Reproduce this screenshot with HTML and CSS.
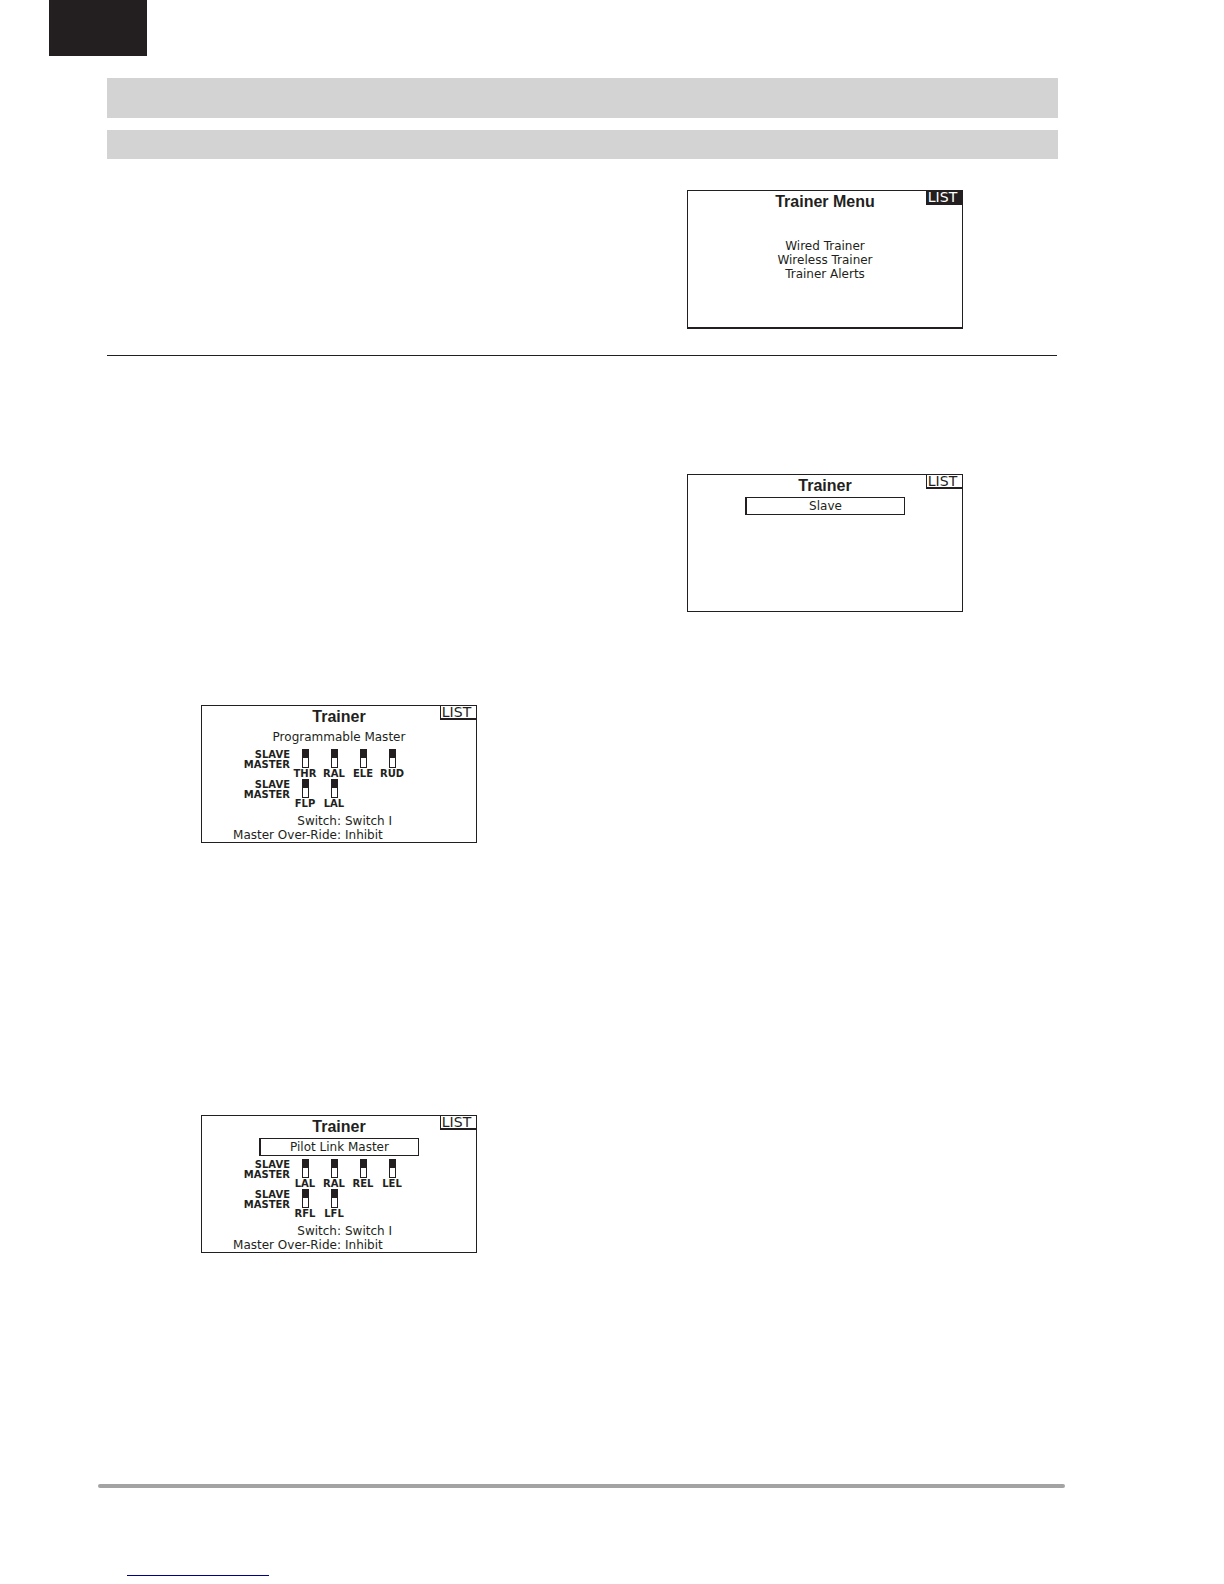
FILE: index.html
```
<!DOCTYPE html>
<html lang="en">
<head>
    <meta charset="utf-8">
    <title>Trainer</title>
    <link rel="stylesheet" href="styles.css">
</head>
<body>
    <header class="tab"></header>
    <main class="content">
        <div class="bar bar-title"></div>
        <div class="bar bar-section"></div>

        <section class="columns intro">
            <div class="column right">
                <div class="screen screen-menu">
                    <h2>Trainer Menu</h2>
                    <button class="list active">LIST</button>
                    <nav class="menu">
                        <a href="#wired">Wired Trainer</a>
                        <a href="#wireless">Wireless Trainer</a>
                        <a href="#alerts">Trainer Alerts</a>
                    </nav>
                </div>
            </div>
        </section>

        <section class="columns wired" id="wired">
            <div class="column left">
                <div class="screen">
                    <h2>Trainer</h2>
                    <button class="list">LIST</button>
                    <button class="mode">Programmable Master</button>
                    <div class="channels">
                        <div class="roles">SLAVE<br>MASTER</div>
                        <div class="channel"><i class="switch"></i>THR</div>
                        <div class="channel"><i class="switch"></i>RAL</div>
                        <div class="channel"><i class="switch"></i>ELE</div>
                        <div class="channel"><i class="switch"></i>RUD</div>
                    </div>
                    <div class="channels">
                        <div class="roles">SLAVE<br>MASTER</div>
                        <div class="channel"><i class="switch"></i>FLP</div>
                        <div class="channel"><i class="switch"></i>LAL</div>
                    </div>
                    <dl class="settings">
                        <dt>Switch:</dt>
                        <dd>Switch I</dd>
                        <dt>Master Over-Ride:</dt>
                        <dd>Inhibit</dd>
                    </dl>
                </div>

                <div class="screen">
                    <h2>Trainer</h2>
                    <button class="list">LIST</button>
                    <button class="mode selected">Pilot Link Master</button>
                    <div class="channels">
                        <div class="roles">SLAVE<br>MASTER</div>
                        <div class="channel"><i class="switch"></i>LAL</div>
                        <div class="channel"><i class="switch"></i>RAL</div>
                        <div class="channel"><i class="switch"></i>REL</div>
                        <div class="channel"><i class="switch"></i>LEL</div>
                    </div>
                    <div class="channels">
                        <div class="roles">SLAVE<br>MASTER</div>
                        <div class="channel"><i class="switch"></i>RFL</div>
                        <div class="channel"><i class="switch"></i>LFL</div>
                    </div>
                    <dl class="settings">
                        <dt>Switch:</dt>
                        <dd>Switch I</dd>
                        <dt>Master Over-Ride:</dt>
                        <dd>Inhibit</dd>
                    </dl>
                </div>
            </div>

            <div class="column right">
                <div class="screen">
                    <h2>Trainer</h2>
                    <button class="list">LIST</button>
                    <button class="mode selected">Slave</button>
                </div>
            </div>
        </section>
    </main>

    <footer class="footer">
        <div class="footer-rule"></div>
        <div class="footer-link"></div>
    </footer>
</body>
</html>
```

FILE: styles.css
```
:root {
    --ink: #231f20;
    --bar: #d3d3d3;
    --rule: #a3a3a3;
    --link: #00008b;
}

* {
    box-sizing: border-box;
}

body {
    margin: 0;
    background: #fff;
    color: var(--ink);
    font-family: "DejaVu Sans", sans-serif;
    font-size: 12px;
    line-height: 14px;
}

.tab {
    width: 98px;
    height: 56px;
    margin-left: 49px;
    background: var(--ink);
}

.content {
    margin: 22px 166px 0 107px;
}

.bar {
    background: var(--bar);
}

.bar-title {
    height: 40px;
    margin-bottom: 12px;
}

.bar-section {
    height: 29px;
}

/* two text columns */
.columns {
    display: grid;
    grid-template-columns: 1fr 1fr;
    column-gap: 22px;
    margin-right: 1px;
}

.column {
    display: flex;
    flex-direction: column;
    align-items: center;
}

.left {
    grid-column: 1;
}

.right {
    grid-column: 2;
}

.intro {
    padding: 31px 0 26px;
    border-bottom: 1px solid var(--ink);
}

.wired .left {
    padding-top: 349px;
    gap: 272px;
}

.wired .right {
    padding-top: 118px;
}

/* transmitter display */
.screen {
    position: relative;
    width: 276px;
    height: 138px;
    border: 1px solid var(--ink);
}

.screen-menu {
    height: 139px;
    border-bottom-width: 2px;
}

.screen h2 {
    margin: 0;
    font-family: "Liberation Sans", sans-serif;
    font-size: 16px;
    line-height: 22px;
    text-align: center;
}

button {
    padding: 0;
    background: transparent;
    color: inherit;
    border: none;
    font: inherit;
    cursor: pointer;
}

.list {
    position: absolute;
    top: 0;
    right: 0;
    width: 36px;
    height: 14px;
    padding-right: 4px;
    border-left: 1px solid var(--ink);
    border-bottom: 2px solid var(--ink);
    font-size: 14px;
    line-height: 12px;
}

.list.active {
    background: var(--ink);
    color: #fff;
}

.menu {
    display: flex;
    flex-direction: column;
    align-items: center;
    margin-top: 26px;
}

.menu a {
    color: inherit;
    text-decoration: none;
}

.mode {
    display: block;
    width: 160px;
    height: 18px;
    margin: 0 auto 3px;
    border: 1px solid transparent;
}

.mode.selected {
    border-color: var(--ink);
    border-left-width: 2px;
}

.channels {
    display: grid;
    grid-template-columns: 88px repeat(4, 28px);
    column-gap: 1px;
    height: 30px;
    font-size: 10px;
    font-weight: bold;
    line-height: 10px;
}

.roles {
    padding-top: 1px;
    text-align: right;
}

.channel {
    display: flex;
    flex-direction: column;
    align-items: center;
    gap: 1px;
}

.switch {
    width: 7px;
    height: 19px;
    border: 1px solid var(--ink);
    border-top-width: 9px;
}

.settings {
    display: grid;
    grid-template-columns: 1fr 1fr;
    column-gap: 4px;
    margin: 5px 0 0;
    padding-left: 8px;
}

.settings dt {
    text-align: right;
}

.settings dd {
    margin: 0;
}

.footer {
    margin: 231px 159px 0 98px;
    padding-bottom: 8px;
}

.footer-rule {
    height: 4px;
    border-radius: 2px;
    background: var(--rule);
}

.footer-link {
    width: 142px;
    margin: 87px 0 0 29px;
    border-bottom: 1px solid var(--link);
}
```
